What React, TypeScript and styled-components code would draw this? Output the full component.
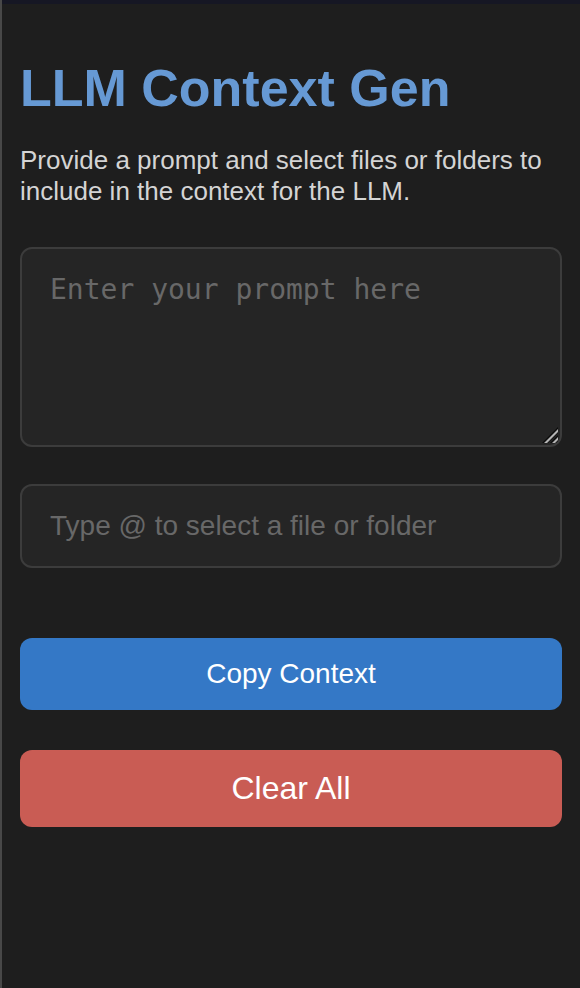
import React, { useState } from "react";
import styled, { createGlobalStyle } from "styled-components";

const GlobalStyle = createGlobalStyle`
  *, *::before, *::after { box-sizing: border-box; }
  body {
    margin: 0;
    background: #1e1e1e;
    font-family: "Liberation Sans", Arial, sans-serif;
  }
`;

const Frame = styled.div`
  display: flex;
  flex-direction: column;
  min-height: 100vh;
  border-left: 2px solid #484848;
`;

const TopEdge = styled.div`
  height: 4px;
  background: #161724;
`;

const Panel = styled.main`
  flex: 1;
  padding: 54px 18px 40px;
  background: #1e1e1e;
  color: #d4d4d4;
`;

const Title = styled.h1`
  margin: 0 0 27px;
  color: #6699d4;
  font-size: 52px;
  line-height: 60px;
`;

const Intro = styled.p`
  margin: 0 0 40px;
  font-size: 26px;
  line-height: 31px;
`;

const Form = styled.form`
  display: flex;
  flex-direction: column;
`;

const PromptField = styled.div`
  position: relative;
  margin: 0 0 37px;
`;

const PromptArea = styled.textarea`
  display: block;
  width: 100%;
  height: 200px;
  padding: 24px 28px;
  border: 2px solid #3c3c3c;
  border-radius: 12px;
  outline: none;
  background: #252525;
  color: #d4d4d4;
  font-family: "DejaVu Sans Mono", monospace;
  font-size: 28px;
  line-height: 34px;
  resize: vertical;
  &::placeholder { color: #686868; }
  &::-webkit-resizer { background: transparent; }
`;

const Grip = styled.svg`
  position: absolute;
  right: 2px;
  bottom: 2px;
  pointer-events: none;
`;

const FileInput = styled.input`
  width: 100%;
  height: 84px;
  margin: 0 0 70px;
  padding: 0 28px;
  border: 2px solid #3c3c3c;
  border-radius: 12px;
  outline: none;
  background: #252525;
  color: #d4d4d4;
  font-family: inherit;
  font-size: 28px;
  &::placeholder { color: #686868; }
`;

const Actions = styled.div`
  display: flex;
  flex-direction: column;
  gap: 40px;
`;

const ActionButton = styled.button<{ $tone: "primary" | "danger" }>`
  width: 100%;
  padding: 20px;
  border: 0;
  border-radius: 12px;
  background: ${({ $tone }) => ($tone === "primary" ? "#3478c6" : "#c95c54")};
  color: #ffffff;
  font-family: inherit;
  font-size: ${({ $tone }) => ($tone === "primary" ? "28px" : "32px")};
  line-height: ${({ $tone }) => ($tone === "primary" ? "32px" : "37px")};
  cursor: pointer;
`;

export default function App() {
  const [prompt, setPrompt] = useState("");
  const [file, setFile] = useState("");

  const clearAll = () => {
    setPrompt("");
    setFile("");
  };

  const copyContext = () => {
    navigator.clipboard?.writeText([prompt, file].filter(Boolean).join("\n"));
  };

  return (
    <>
      <GlobalStyle />
      <Frame>
        <TopEdge />
        <Panel>
          <Title>LLM Context Gen</Title>
          <Intro>
            Provide a prompt and select files or folders to include in the context for the LLM.
          </Intro>
          <Form onSubmit={(event) => event.preventDefault()}>
            <PromptField>
              <PromptArea
                aria-label="Prompt"
                placeholder="Enter your prompt here"
                value={prompt}
                onChange={(event) => setPrompt(event.target.value)}
              />
              <Grip width="18" height="18" viewBox="0 0 18 18" fill="none" aria-hidden="true">
                <path d="M0 16 16 0V6L6 16ZM8 16 16 8V14L14 16Z" fill="#0c0c0c" />
                <path d="M2 16 16 2V5L5 16ZM10 16 16 10V13L13 16Z" fill="#b4b4b4" />
              </Grip>
            </PromptField>
            <FileInput
              type="text"
              aria-label="File or folder"
              placeholder="Type @ to select a file or folder"
              value={file}
              onChange={(event) => setFile(event.target.value)}
            />
            <Actions>
              <ActionButton type="button" $tone="primary" onClick={copyContext}>
                Copy Context
              </ActionButton>
              <ActionButton type="button" $tone="danger" onClick={clearAll}>
                Clear All
              </ActionButton>
            </Actions>
          </Form>
        </Panel>
      </Frame>
    </>
  );
}
